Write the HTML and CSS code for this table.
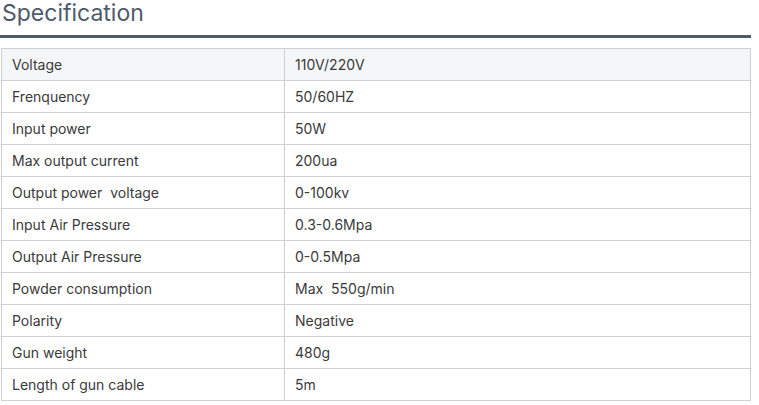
FILE: index.html
```html
<!DOCTYPE html>
<html>
<head>
<meta charset="utf-8">
<link rel="stylesheet" href="styles.css">
</head>
<body>
<div class="spec">
  <h2 class="spec-title">Specification</h2>
  <div class="spec-rule"></div>
  <table class="spec-table">
    <tr class="first"><td class="k">Voltage</td><td class="v">110V/220V</td></tr>
    <tr><td class="k">Frenquency</td><td class="v">50/60HZ</td></tr>
    <tr><td class="k">Input power</td><td class="v">50W</td></tr>
    <tr><td class="k">Max output current</td><td class="v">200ua</td></tr>
    <tr><td class="k">Output power&nbsp; voltage</td><td class="v">0-100kv</td></tr>
    <tr><td class="k">Input Air Pressure</td><td class="v">0.3-0.6Mpa</td></tr>
    <tr><td class="k">Output Air Pressure</td><td class="v">0-0.5Mpa</td></tr>
    <tr><td class="k">Powder consumption</td><td class="v">Max&nbsp; 550g/min</td></tr>
    <tr><td class="k">Polarity</td><td class="v">Negative</td></tr>
    <tr><td class="k">Gun weight</td><td class="v">480g</td></tr>
    <tr><td class="k">Length of gun cable</td><td class="v">5m</td></tr>
  </table>
</div>
</body>
</html>
```
FILE: styles.css
```css
html, body {
  margin: 0;
  padding: 0;
  background: #fff;
}
body {
  font-family: Inter, "Noto Sans", sans-serif;
  color: #3a3a3a;
}
.spec {
  width: 751px;
}
.spec-title {
  margin: 0;
  padding: 0 0 0 2px;
  font-size: 23px;
  font-weight: 400;
  line-height: 26px;
  color: #4e5a6b;
}
.spec-rule {
  margin-top: 9px;
  height: 3px;
  background: #4f5b6b;
}
.spec-table {
  margin: 10px 0 0 1px;
  width: 750px;
  border-collapse: collapse;
  font-size: 14px;
}
.spec-table td {
  height: 31px;
  padding: 0 10px;
  border: 1px solid #d0d0d0;
  vertical-align: middle;
  line-height: 16px;
}
.spec-table td.k {
  width: 262px;
}
.spec-table tr.first td {
  background: #f5f6f8;
}
```
